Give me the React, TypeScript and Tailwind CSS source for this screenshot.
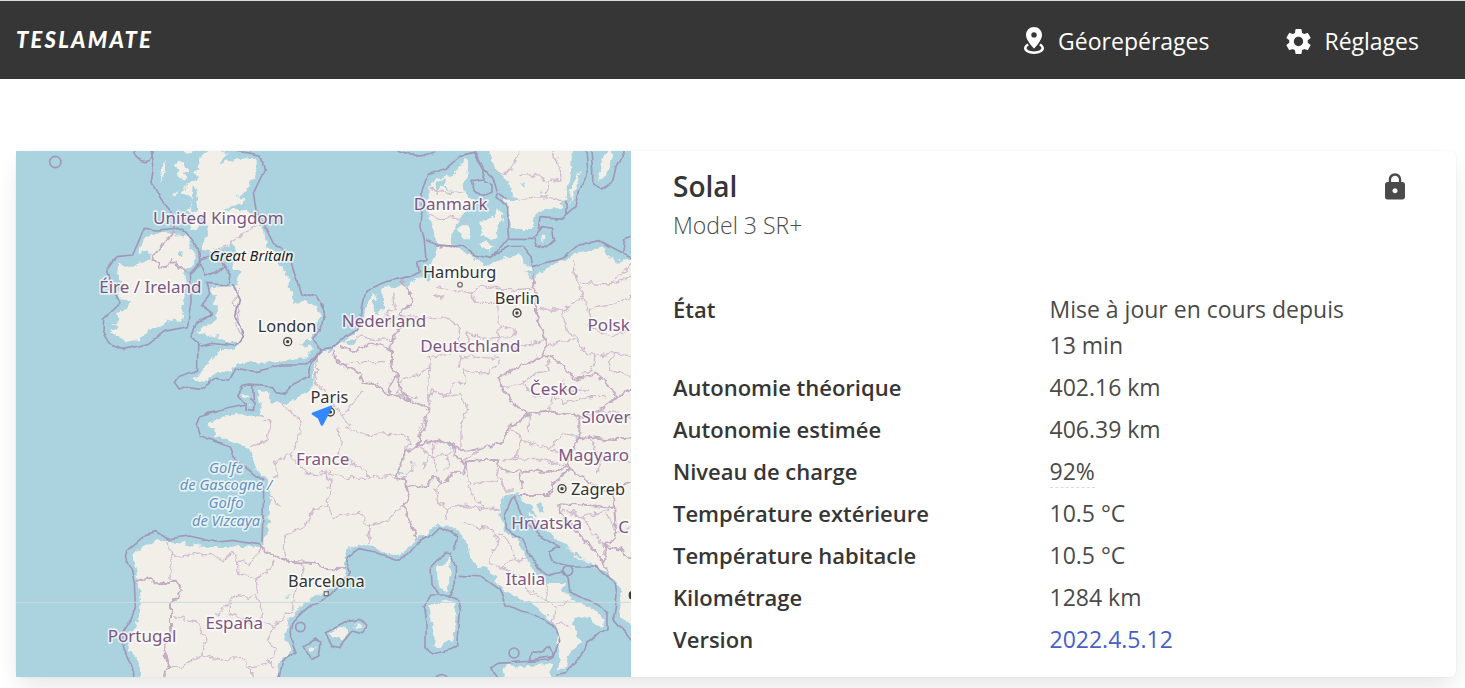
import { MdLock, MdSettings } from "react-icons/md";

const vehicle = {
  name: "Solal",
  model: "Model 3 SR+",
};

const stats = [
  { label: "État", value: "Mise à jour en cours depuis 13 min" },
  { label: "Autonomie théorique", value: "402.16 km" },
  { label: "Autonomie estimée", value: "406.39 km" },
  { label: "Niveau de charge", value: "92%", kind: "hint" },
  { label: "Température extérieure", value: "10.5 °C" },
  { label: "Température habitacle", value: "10.5 °C" },
  { label: "Kilométrage", value: "1284 km" },
  { label: "Version", value: "2022.4.5.12", kind: "link" },
];

// Map geometry, three units per screen pixel
const LAND = [
  // Great Britain
  "M580 0L555 15 548 50 530 70 540 90 515 100 500 130 525 140 530 165 510 185 530 190 525 240 545 235 550 200 570 195 575 240 560 275 562 300 590 305 620 295 650 280 660 300 665 330 640 340 650 360 670 365 665 400 650 410 610 410 580 420 600 440 590 460 610 470 600 510 560 530 545 545 580 560 610 555 630 575 665 580 640 600 610 600 590 630 560 650 555 670 528 685 560 700 575 690 600 670 620 665 640 670 665 640 720 635 760 640 830 630 880 620 890 595 850 580 885 570 890 550 915 500 905 470 870 452 830 465 835 440 815 400 820 385 790 340 780 310 750 290 745 240 720 215 690 180 650 180 620 178 680 160 685 145 660 140 700 110 725 55 725 30 690 25 640 30 610 40 630 15 610 0Z",
  "M475 45L490 30 505 45 520 60 505 70 515 85 500 95 488 75ZM438 50L450 30 445 70 435 95ZM462 140L485 122 480 135ZM500 5L515 15 530 5 520 -5ZM530 105L545 120 535 160 545 175 535 190 525 180Z",
  // Ireland
  "M380 265L440 245 480 255 515 260 525 290 540 320 530 350 500 360 510 400 505 450 500 490 495 515 450 510 430 530 400 540 375 570 330 575 300 555 285 545 310 530 285 520 310 510 300 490 330 480 350 450 310 455 310 420 320 400 300 370 305 335 330 350 400 330 400 305 370 305Z",
  // Continent
  "M725 725L760 730 765 755 800 765 850 740 890 710 900 620 948 595 988 570 1018 545 1040 500 1062 460 1068 430 1085 440 1078 480 1100 470 1095 415 1138 410 1178 405 1218 380 1238 400 1243 340 1263 300 1255 235 1238 205 1238 110 1263 85 1318 70 1343 30 1356 40 1355 75 1343 110 1353 140 1380 150 1350 190 1330 205 1315 240 1300 270 1315 290 1350 310 1380 330 1408 350 1438 335 1508 310 1520 325 1535 350 1558 380 1608 345 1668 325 1675 310 1758 290 1778 320 1798 335 1870 325 1870 1440 1813 1400 1813 1356 1808 1306 1778 1276 1718 1236 1618 1161 1568 1116 1538 1096 1518 1056 1508 1026 1468 1036 1448 1051 1453 1096 1458 1125 1478 1151 1518 1186 1533 1236 1558 1266 1588 1296 1648 1296 1638 1320 1678 1356 1728 1376 1763 1406 1758 1431 1738 1426 1728 1405 1678 1400 1668 1426 1693 1476 1663 1501 1648 1556 1623 1556 1633 1506 1628 1476 1613 1416 1578 1386 1538 1356 1468 1326 1438 1286 1413 1256 1368 1236 1353 1186 1333 1146 1308 1131 1268 1121 1238 1146 1203 1171 1178 1191 1148 1216 1108 1211 1068 1191 1023 1181 988 1206 983 1246 988 1271 948 1316 900 1341 855 1366 820 1406 805 1456 830 1501 790 1536 778 1600 370 1600 368 1521 335 1506 345 1456 372 1386 375 1346 362 1296 362 1256 345 1216 385 1191 425 1166 450 1176 510 1181 580 1191 660 1190 730 1194 745 1185 757 1116 762 1026 755 986 720 966 708 910 690 891 650 876 598 858 595 840 575 820 615 800 680 795 740 800 735 780Z",
  // Scandinavia and Danish islands
  "M1413 -15L1438 50 1470 90 1493 135 1510 150 1463 150 1478 190 1483 240 1548 240 1560 185 1638 170 1655 120 1663 60 1673 -15Z",
  "M1693 60L1680 120 1660 165 1665 120ZM1750 90L1755 30 1780 5 1790 -15 1785 40 1765 80ZM1390 215L1430 200 1440 175 1465 190 1450 225 1440 250 1445 265 1420 270 1395 250ZM1325 240L1350 222 1372 245 1362 268 1340 268ZM1385 285L1410 280 1440 290 1420 305ZM1572 262L1590 258 1596 270 1583 275Z",
  // Mediterranean islands
  "M1458 1556L1475 1545 1520 1552 1612 1538 1600 1600 1475 1600ZM1240 1366L1262 1365 1290 1345 1315 1358 1320 1380 1312 1476 1290 1475 1270 1495 1250 1490 1255 1440 1240 1400ZM1262 1250L1290 1240 1298 1216 1306 1250 1300 1300 1290 1328 1265 1300ZM940 1450L985 1426 995 1445 975 1475ZM1010 1428L1030 1420 1040 1430 1020 1432ZM875 1500L900 1485 895 1505Z",
  // Channel and Dalmatian islands
  "M680 735L700 738 690 745ZM700 765L712 768 705 772ZM1560 1080L1580 1110 1570 1118ZM1600 1140L1650 1175 1630 1175ZM1650 1190L1700 1210 1680 1212ZM1670 1215L1730 1240 1690 1232Z",
];

const WATER =
  "M485 305L500 300 498 318 485 318ZM1075 445L1100 455 1105 480 1080 490 1070 470ZM1255 100L1290 85 1285 105 1315 125 1280 110 1260 130ZM1345 210L1385 225 1390 260 1375 270ZM1140 970L1170 965 1150 975ZM1280 870L1315 885 1300 890ZM1360 1025L1368 1020 1365 1040ZM1515 1055L1545 1060 1560 1100 1535 1090ZM1560 1060L1580 1055 1580 1090ZM1225 390L1250 365 1245 395ZM1528 360L1560 375 1545 385ZM1530 95L1525 110 1515 100ZM1570 120L1578 128 1568 130ZM805 1338L825 1332 815 1342ZM1690 860L1680 870 1678 860ZM985 575L1025 565 1010 585Z";

const MARITIME = [
  "M405 0L415 60 408 100 435 150 470 190 478 235 510 250 550 300 555 340 520 370",
  "M478 235L425 240 385 235 350 315 300 320 272 360 285 420 315 458 260 510 258 545 280 580 325 598 400 580 445 545 515 530 525 450 520 370 560 325 600 310 625 345 645 375 640 400",
  "M555 340L570 378 600 365 625 345M640 405L570 400 578 435 555 465 592 492 540 525 525 560 545 580 545 660 490 680 475 700 490 720 515 710 560 715 600 685 640 690 660 655 720 665 800 645 870 645 915 600 890 565 915 540 924 480 900 440 855 430 835 370 820 310 780 290 755 240 720 180 712 130 745 60 735 15 670 5 650 0",
  "M355 0Q360 35 385 35T412 0",
  "M545 590L590 580 660 588 682 560 672 530 658 500 670 450 650 405",
  "M565 792L620 780 690 765 665 735 680 710 700 705 770 710 780 725 810 730 830 705 880 680 885 640 918 600 950 595 990 560 1030 540 1038 480 1050 420 1110 395 1180 380 1210 365 1205 340 1230 330 1225 270 1215 230 1218 180 1215 130 1235 75 1290 55 1330 20 1375 10 1400 50 1430 80 1445 130 1440 145 1475 170 1475 230 1478 265 1450 300 1420 325 1380 315 1340 290 1260 285 1230 270",
  "M710 705L712 750M690 765L690 780 715 785 718 760 700 745",
  "M1375 0L1405 60 1400 90 1365 95 1375 120 1400 140 1425 130 1425 105 1400 90M1445 130L1475 150",
  "M1420 325L1480 290 1520 290 1545 320 1550 350 1640 325 1680 290 1750 272 1800 300 1820 310M1865 255L1825 270 1820 310 1865 335",
  "M1478 265L1550 265 1580 230 1610 235 1615 270 1590 293 1560 285 1553 265M1570 240L1575 200 1640 205 1680 170 1690 120 1715 60 1710 0M1650 195L1650 155",
  "M1725 0L1730 60 1730 105 1755 118 1790 95 1800 50 1825 0M1140 3Q1200 28 1255 3M918 460Q932 490 918 520",
  "M600 786L550 801 540 826 550 856 640 891 650 916 690 951 740 991 743 1036 738 1176M735 1185L650 1171 600 1176 520 1158 460 1166 420 1148 390 1156 335 1201 330 1236 350 1276 355 1296 358 1376 345 1406 320 1446 320 1496 350 1546 350 1595",
  "M785 1595L800 1536 840 1506 820 1456 830 1416 860 1386 890 1361 920 1350 945 1335 1003 1271M1003 1271L988 1226 1028 1196 1078 1206 1148 1231 1178 1211 1203 1181 1238 1161 1268 1131 1328 1161 1313 1201",
  "M1290 1205L1305 1210 1318 1250 1318 1300 1300 1335 1270 1335 1248 1300 1245 1256 1270 1230ZM1245 1335L1290 1335 1325 1350 1333 1380 1325 1486 1300 1500 1250 1512 1230 1490 1230 1420 1222 1370Z",
  "M1328 1276L1398 1281 1448 1316 1468 1366 1558 1396 1618 1436 1628 1476 1610 1520 1540 1530 1545 1505 1580 1510 1600 1490 1612 1510 1600 1530 1450 1540 1422 1555 1430 1570 1450 1595",
  "M1618 1576L1648 1571 1708 1496 1713 1476 1773 1436 1773 1396 1748 1366 1658 1321 1653 1286 1638 1266 1598 1276 1568 1256 1538 1206 1518 1166 1468 1136 1466 1096 1493 1036 1508 1076 1538 1126 1568 1156 1628 1191 1598 1206 1608 1231 1658 1251 1738 1251 1798 1301 1803 1336 1793 1406 1865 1490",
  "M925 1450L1000 1412 1030 1405 1052 1428 1040 1448 1010 1440 970 1490 945 1485ZM868 1490L895 1470 915 1480 910 1515 885 1525Z",
];

const BORDERS = [
  "M478 245L435 290 405 320 435 350 455 345 462 330 490 355 520 370",
  "M730 1190L770 1215 820 1235 900 1240 930 1258 988 1256",
  "M355 1295L400 1282 410 1297 480 1295 500 1320 465 1360 465 1440 445 1500 460 1550 435 1595",
  "M948 595L960 635 1000 655 1030 670 1040 695 1075 700 1115 735 1160 740 1180 755 1240 775 1230 820 1210 860 1205 885",
  "M975 590L1020 605 1060 580 1100 590 1125 600 1125 640 1145 680 1120 700 1122 735M1125 600L1135 550 1165 525 1150 490 1185 460 1185 430 1150 390M1145 680L1155 720 1185 755",
  "M1135 985L1170 905 1210 885 1260 870 1310 885 1320 920 1350 940 1340 970 1300 975 1280 1005 1255 975 1235 1005 1170 1010 1165 980 1135 990M1170 1010L1180 1040 1162 1065 1180 1110 1205 1170",
  "M1310 885L1345 905 1400 895 1460 875 1480 830 1510 815 1540 790M1345 935L1400 930 1445 930 1460 960 1520 965 1620 965 1655 945 1660 920 1690 860",
  "M1448 680L1510 650 1580 620 1600 615 1650 655 1680 690 1740 670 1770 700 1800 740 1760 775 1700 800 1660 790 1600 785 1540 790 1490 760 1460 710Z",
  "M1550 360L1560 450 1560 500 1585 560 1588 600 1580 620M1800 740L1865 715M1690 860L1770 870 1865 860M1690 800L1690 860",
  "M1508 1035L1600 1035 1610 1000 1660 960 1655 945M1510 970L1518 1020M1660 955L1720 1000 1790 1030 1865 980M1625 1060L1640 1100 1700 1160 1765 1240M1625 1060L1720 1065 1795 1075 1800 1150 1765 1190 1765 1240M1795 1075L1790 1030M1765 1190L1820 1200 1865 1250M1778 1276L1765 1240",
  "M1258 285L1300 288 1320 295",
];

const REGIONS = [
  "M560 330L600 300 650 275 720 225M672 410L655 460 670 500 660 530 682 560",
  "M985 650L1000 635 1110 635M1035 720L1010 760 980 800 1000 825M900 620L905 660 895 700 924 720 980 800M800 765L860 815 840 880 822 915 860 955 870 970 924 975M740 815L765 815 755 870 700 890M765 1000L785 970 775 935 822 915M762 1030L790 1075M805 1220L812 1155 865 1130 895 1075 935 1070 950 1100 1030 1090 1063 1130 1120 1110 1160 1065M935 1070L945 990 924 975M945 990L918 965 1010 985 1050 985 1135 975M965 830L975 885 965 910 1050 965 1060 985M985 830L1050 855 1130 850 1180 865 1165 925M1063 1130L1055 1185",
  "M455 1180L465 1220 465 1290M465 1220L580 1210 620 1230 650 1205 665 1230 700 1240 720 1220 735 1195M665 1230L665 1270 720 1285 725 1330 700 1345 660 1335 600 1395M720 1285L750 1270 780 1230M725 1340L735 1375 740 1410 700 1420 640 1390 640 1345M860 1240L860 1300 835 1320 830 1380 770 1430 740 1410M475 1400L540 1415 570 1470 560 1510 500 1550 460 1550M560 1510L600 1530 690 1525 700 1555 760 1540 780 1500 755 1470 770 1430M700 1555L720 1595M780 1550L750 1530",
  "M1210 885L1210 840 1240 780M1335 895L1335 830 1355 780 1335 730 1290 745 1280 720M1240 775L1245 720 1300 735 1310 700 1350 700 1345 660 1410 670 1450 645 1440 610M1210 745L1140 730 1160 690 1240 655 1240 620 1300 610 1330 590 1330 530 1280 500 1240 505M1245 640L1235 700 1240 775M1335 590L1360 575 1350 545 1400 565 1490 560 1500 540 1450 525 1445 460 1380 460 1370 430 1260 410M1370 430L1400 405 1480 420 1550 415M1450 525L1445 575 1500 595 1588 570M1330 650L1335 620 1445 625M1260 440L1280 435 1270 450M1130 430L1135 480 1110 490 1130 520M1100 500L1190 505 1240 500M1020 560L1125 570",
  "M1590 585L1680 565 1700 600 1740 620 1730 660 1700 670M1680 565L1650 540 1640 480 1560 480M1640 480L1700 440 1675 370 1670 330M1675 370L1700 400 1780 405 1865 375M1700 440L1720 480 1720 530 1780 560 1865 535M1720 480L1790 460 1865 435M1740 620L1790 610 1865 620M1790 610L1780 660 1865 685M1780 405L1865 325",
  "M1460 710L1520 700 1560 670 1600 660 1590 620M1520 700L1560 740 1610 730 1640 760 1700 740 1770 740M1610 730L1600 785M1640 690L1650 720 1720 720",
  "M1415 60L1480 70 1510 0M1510 80L1550 75 1600 95 1640 85 1610 0M1600 95L1590 140 1510 145M1590 140L1645 155M1240 195L1280 210 1310 200 1350 210M1240 110L1260 130 1340 125",
  "M1350 940L1355 985 1370 1040 1410 1075 1450 1075M1295 1075L1340 1065 1450 1080M1295 1075L1290 1110M1295 1075L1265 1060 1260 1020 1280 1005M1370 1000L1440 990 1450 940M1340 1120L1430 1140 1450 1170 1430 1210 1420 1240 1450 1250 1500 1230 1480 1180 1450 1150M1450 1250L1510 1280 1530 1320M1500 1230L1530 1230M1530 1320L1590 1350 1620 1370 1610 1420 1660 1425M1590 1290L1590 1350M1620 1370L1660 1350M1450 980L1465 1020 1500 1020",
  "M1480 830L1520 870 1500 920 1460 930M1520 870L1600 900 1660 915M1540 850L1540 790M1600 900L1640 850 1690 860M1460 930L1560 925 1650 945M1400 895L1345 930M1210 890L1240 920 1220 960M1240 920L1300 915 1290 960M1300 915L1310 890M1190 930L1190 960 1160 980M1250 880L1260 970",
  "M1720 870L1760 920 1740 970M1760 920L1865 945M1640 1080L1700 1100 1780 1080M1700 1100L1730 1150 1765 1190M1800 1150L1865 1120M1720 800L1740 780 1865 805M1790 1120L1770 1090",
];

type MapLabel = {
  x: number;
  y: number;
  text: string;
};

const countries: MapLabel[] = [
  { x: 607, y: 223, text: "United Kingdom" },
  { x: 403, y: 429, text: "Éire / Ireland" },
  { x: 1304, y: 180, text: "Danmark" },
  { x: 1104, y: 530, text: "Nederland" },
  { x: 1363, y: 606, text: "Deutschland" },
  { x: 1778, y: 542, text: "Polsk" },
  { x: 1614, y: 735, text: "Česko" },
  { x: 1770, y: 818, text: "Slover" },
  { x: 1733, y: 934, text: "Magyaro" },
  { x: 920, y: 945, text: "France" },
  { x: 1592, y: 1136, text: "Hrvatska" },
  { x: 1528, y: 1306, text: "Italia" },
  { x: 378, y: 1476, text: "Portugal" },
  { x: 655, y: 1437, text: "España" },
  { x: 1823, y: 1148, text: "C" },
];

const cities: MapLabel[] = [
  { x: 813, y: 546, text: "London" },
  { x: 940, y: 760, text: "Paris" },
  { x: 1331, y: 385, text: "Hamburg" },
  { x: 1504, y: 463, text: "Berlin" },
  { x: 1746, y: 1036, text: "Zagreb" },
  { x: 931, y: 1312, text: "Barcelona" },
];

const capitals = [
  [815, 575],
  [943, 786],
  [1503, 489],
  [1638, 1016],
];

const seaLabel: MapLabel[] = [
  { x: 630, y: 968, text: "Golfe" },
  { x: 630, y: 1021, text: "de Gascogne /" },
  { x: 630, y: 1075, text: "Golfo" },
  { x: 630, y: 1129, text: "de Vizcaya" },
];

function VehicleMap() {
  return (
    <svg
      viewBox="0 3 1845 1578"
      preserveAspectRatio="xMidYMid slice"
      role="img"
      aria-label="Carte"
      className="absolute inset-0 h-full w-full bg-[#aad3df] font-['Noto_Sans',sans-serif]"
    >
      <defs>
        <filter
          id="coast"
          filterUnits="userSpaceOnUse"
          x="-20"
          y="-20"
          width="1885"
          height="1625"
          colorInterpolationFilters="sRGB"
        >
          <feTurbulence type="fractalNoise" baseFrequency="0.045" numOctaves="3" seed="4" />
          <feDisplacementMap in="SourceGraphic" scale="24" xChannelSelector="R" yChannelSelector="G" />
        </filter>
        <filter
          id="drift"
          filterUnits="userSpaceOnUse"
          x="-20"
          y="-20"
          width="1885"
          height="1625"
          colorInterpolationFilters="sRGB"
        >
          <feTurbulence type="fractalNoise" baseFrequency="0.025" numOctaves="1" seed="7" />
          <feDisplacementMap in="SourceGraphic" scale="20" xChannelSelector="R" yChannelSelector="G" />
        </filter>
      </defs>
      <g filter="url(#coast)" strokeLinejoin="round" fill="none">
        <path d={LAND.join("")} fill="#f2efe9" />
        <path d={WATER} fill="#aad3df" />
        <path d={REGIONS.join("")} stroke="#d0bccf" strokeWidth="4" />
        <path d={BORDERS.join("")} stroke="#c3adc3" strokeWidth="6" />
      </g>
      <g fill="none" stroke="#9f98b8" strokeWidth="5" strokeLinejoin="round">
        <path d={MARITIME.join("")} filter="url(#drift)" />
        <circle cx="118" cy="36" r="17" />
        <circle cx="1655" cy="1262" r="15" />
        <circle cx="1494" cy="1509" r="15" />
        <circle cx="853" cy="1431" r="14" />
        <path d="M1260 1581q18 -14 34 0" />
      </g>
      <path d="M0 1357H1845" stroke="#c8dadd" strokeWidth="3" />
      <g stroke="#444" strokeWidth="4" fill="#f2efe9">
        {capitals.map(([cx, cy]) => (
          <g key={cx}>
            <circle cx={cx} cy={cy} r="12" />
            <circle cx={cx} cy={cy} r="3" fill="#444" />
          </g>
        ))}
        <circle cx="1332" cy="404" r="7" stroke="#777" />
        <rect x="925" y="1325" width="12" height="12" stroke="#777" />
        <ellipse cx="1845" cy="1336" rx="5" ry="10" fill="#333" />
      </g>
      <g
        textAnchor="middle"
        stroke="#fff"
        strokeOpacity="0.7"
        strokeWidth="10"
        strokeLinejoin="round"
        paintOrder="stroke"
      >
        <g fill="#7d5680" fontSize="51">
          {countries.map((c) => (
            <text key={c.text} x={c.x} y={c.y}>
              {c.text}
            </text>
          ))}
        </g>
        <g fill="#333" fontSize="49">
          {cities.map((c) => (
            <text key={c.text} x={c.x} y={c.y}>
              {c.text}
            </text>
          ))}
        </g>
        <text x="707" y="332" fill="#222" fontSize="44" fontStyle="italic">
          Great Britain
        </text>
        <g fill="#6490c0" fontSize="44" fontStyle="italic">
          {seaLabel.map((c) => (
            <text key={c.text} x={c.x} y={c.y}>
              {c.text}
            </text>
          ))}
        </g>
      </g>
      <path
        d="M945 771L891 791 909 803 918 823Z"
        fill="#3388ff"
        stroke="#3388ff"
        strokeWidth="8"
        strokeLinejoin="round"
      />
    </svg>
  );
}

function GeofenceIcon() {
  return (
    <svg viewBox="0 0 24 28" fill="currentColor" aria-hidden="true" className="h-7 w-6">
      <path
        fillRule="evenodd"
        d="M12 0C7.600 0 4 3.500 4 7.900 4 13.500 12 21.500 12 21.500S20 13.500 20 7.900C20 3.500 16.400 0 12 0ZM12 5.200A2.700 2.700 0 1 1 12 10.600 2.700 2.700 0 0 1 12 5.200Z"
      />
      <path d="M5.500 16.500C3.300 17.700 2 19.400 2 21.300 2 24.600 6.500 27 12 27S22 24.600 22 21.300C22 19.400 20.700 17.700 18.500 16.500L17.200 18.500C18.600 19.300 19.400 20.200 19.400 21.100 19.400 22.900 16.200 24.500 12 24.500S4.600 22.900 4.600 21.100C4.600 20.200 5.400 19.300 6.800 18.500Z" />
    </svg>
  );
}

function Navbar() {
  return (
    <nav className="flex h-[79px] items-center justify-between border-t border-[#d5dcda] bg-[#363636] pr-[46px] pl-4 text-white">
      <a href="#" className="font-[Lato,sans-serif] text-[22px] leading-8 font-black tracking-widest italic">
        TESLAMATE
      </a>
      <div className="flex items-center gap-[74px] pt-[2px] text-[23px] leading-9">
        <a href="#geofences" className="flex items-center gap-3">
          <GeofenceIcon />
          Géorepérages
        </a>
        <a href="#settings" className="flex items-center gap-[10px]">
          <MdSettings className="h-[31px] w-[31px]" />
          Réglages
        </a>
      </div>
    </nav>
  );
}

function StatValue({ value, kind }: { value: string; kind?: string }) {
  if (kind === "link") {
    return (
      <a href="#release" className="text-[#485fc7]">
        {value}
      </a>
    );
  }
  if (kind === "hint") {
    return <span className="border-b border-dashed border-[#dbdbdb]">{value}</span>;
  }
  return <>{value}</>;
}

function VehicleCard() {
  return (
    <section className="flex rounded-md bg-white shadow-[0_12px_24px_-3px_rgba(10,10,10,0.1),0_0_0_1px_rgba(10,10,10,0.02)]">
      <div className="relative w-[615px] shrink-0 overflow-hidden">
        <VehicleMap />
      </div>
      <div className="min-w-0 flex-1 px-[42px] pt-[17px] pb-5">
        <div className="flex items-start justify-between">
          <div>
            <h1 className="text-[28px] leading-9 font-semibold">{vehicle.name}</h1>
            <p className="pt-[3px] text-[23px] leading-9 font-light text-[#4a4a4a]">{vehicle.model}</p>
          </div>
          <MdLock className="mt-1 mr-1 h-[30px] w-[30px] text-[#4a4a4a]" title="Verrouillé" />
        </div>
        <dl className="mt-12 space-y-[6px] leading-9">
          {stats.map((s) => (
            <div key={s.label} className="grid grid-cols-2 gap-3">
              <dt className="text-[22px] leading-9 font-semibold">{s.label}</dt>
              <dd className="pr-11 text-[23px] leading-9 text-[#4a4a4a]">
                <StatValue value={s.value} kind={s.kind} />
              </dd>
            </div>
          ))}
        </dl>
      </div>
    </section>
  );
}

export default function App() {
  return (
    <div className="overflow-x-hidden bg-white font-['Open_Sans',sans-serif] text-[#363636]">
      <Navbar />
      <main className="pt-[72px] pr-[9px] pb-[11px] pl-4">
        <VehicleCard />
      </main>
    </div>
  );
}
